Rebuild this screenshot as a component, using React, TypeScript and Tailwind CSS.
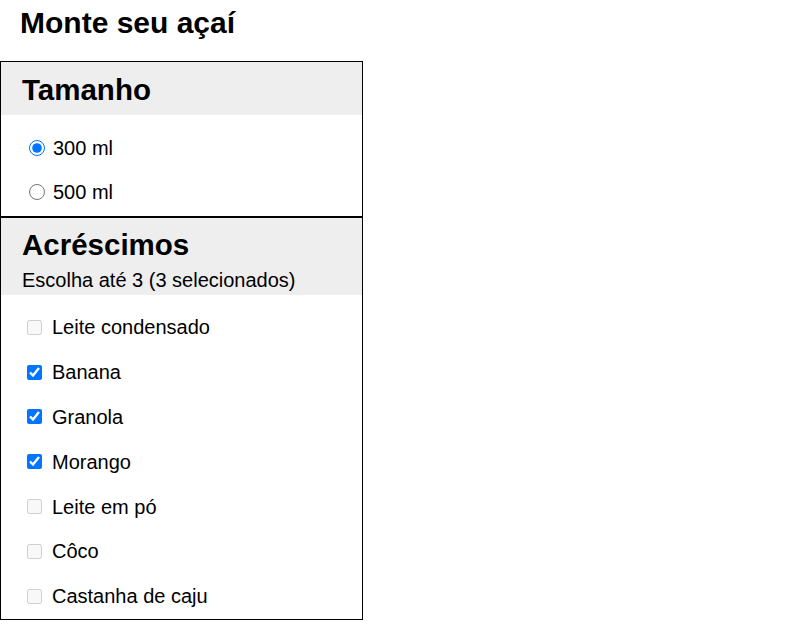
import { useState } from "react"

const sizes = ["300 ml", "500 ml"]

const extras = [
    "Leite condensado",
    "Banana",
    "Granola",
    "Morango",
    "Leite em pó",
    "Côco",
    "Castanha de caju",
]

const MAX = 3

export default function App() {
    const [size, setSize] = useState("300 ml")
    const [picked, setPicked] = useState<string[]>(["Banana", "Granola", "Morango"])

    const toggle = (item: string) => {
        setPicked((prev) =>
            prev.includes(item) ? prev.filter((p) => p !== item) : [...prev, item]
        )
    }

    return (
        <div className="font-['Liberation_Sans',Arial,sans-serif] text-black bg-white min-h-[625px]">
            <h1 className="pl-5 pt-[6px] text-[30px] leading-[34px] font-bold h-[61px]">Monte seu açaí</h1>

            <div className="w-[363px]">
                <section className="border border-black">
                    <div className="bg-[#eeeeee] pl-[21px] pt-[11px] pb-[8px]">
                        <h2 className="text-[29.5px] leading-[34px] font-bold">Tamanho</h2>
                    </div>
                    <div className="pt-[11px] pb-[2px]">
                        {sizes.map((s) => (
                            <label key={s} className="flex items-center h-[44px] pl-[28px] text-[20px]">
                                <input
                                    type="radio"
                                    name="size"
                                    checked={size === s}
                                    onChange={() => setSize(s)}
                                    className="w-[16px] h-[16px] m-0"
                                />
                                <span className="ml-[8px]">{s}</span>
                            </label>
                        ))}
                    </div>
                </section>

                <section className="border border-black">
                    <div className="bg-[#eeeeee] pl-[21px] pt-[10px] pb-[3px]">
                        <h2 className="text-[29.5px] leading-[34px] font-bold">Acréscimos</h2>
                        <p className="text-[20px] leading-[23px] mt-[7px]">
                            Escolha até {MAX} ({picked.length} selecionados)
                        </p>
                    </div>
                    <div className="pt-[10px] pb-0">
                        {extras.map((e) => {
                            const on = picked.includes(e)
                            return (
                                <label key={e} className="flex items-center h-[44.8px] pl-[26px] text-[20px]">
                                    <input
                                        type="checkbox"
                                        checked={on}
                                        disabled={!on && picked.length >= MAX}
                                        onChange={() => toggle(e)}
                                        className="w-[15px] h-[15px] m-0"
                                    />
                                    <span className="ml-[10px]">{e}</span>
                                </label>
                            )
                        })}
                    </div>
                </section>
            </div>
        </div>
    )
}
